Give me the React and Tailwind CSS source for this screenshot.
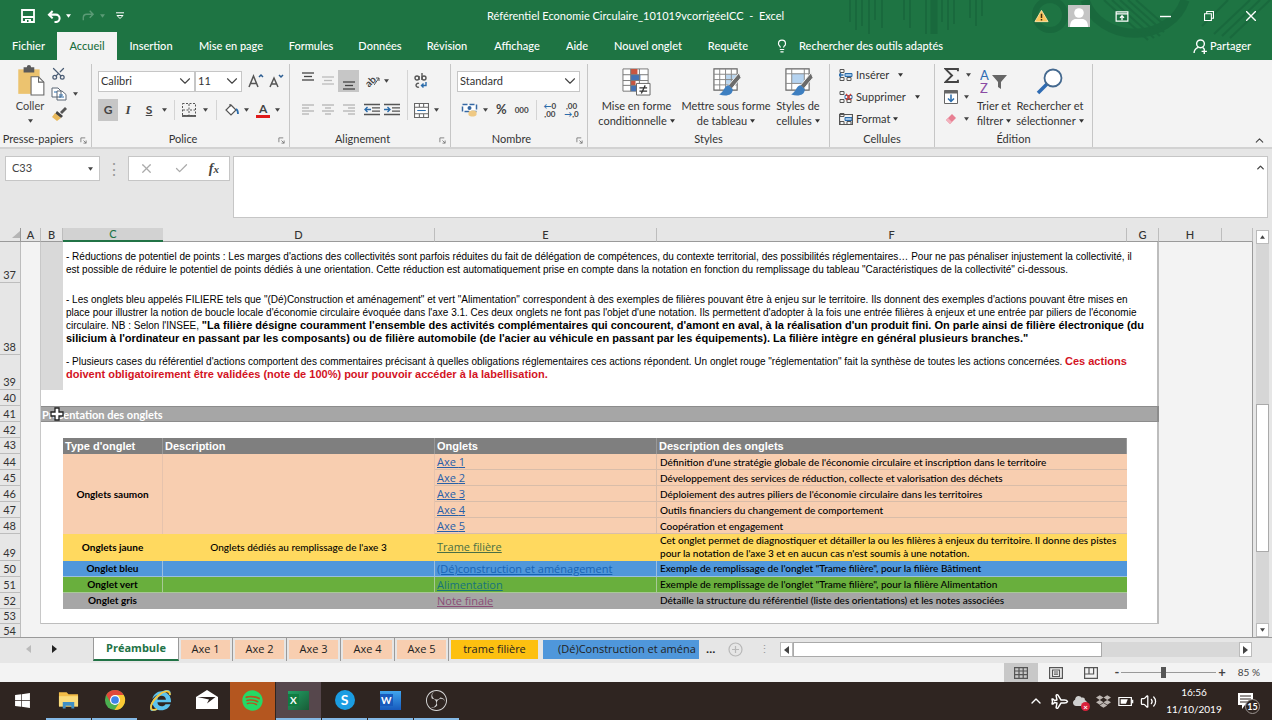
import React from "react";
import { Scissors, Lightbulb, ChevronDown, ChevronUp, X, Check, Plane, Volume2 } from "lucide-react";
import { FaWindows, FaSpotify, FaInternetExplorer, FaDropbox, FaCloud } from "react-icons/fa";
import { SiObsstudio } from "react-icons/si";

const Caret = ({ className = "" }) => (
  <svg viewBox="0 0 6 4" className={`h-[4px] w-[5px] shrink-0 fill-current ${className}`} aria-hidden="true">
    <path d="M0 0h6L3 4z" />
  </svg>
);

/* ---------- Title bar ---------- */

function HeaderPattern() {
  return (
    <svg className="pointer-events-none absolute top-0 right-0 h-full w-[430px]" viewBox="0 0 430 60" fill="none" stroke="#17623a" aria-hidden="true">
      <g opacity="0.6">
        <path d="M8 0v22M14 0v30M20 0v26M27 0v34M33 0v20M40 0v28M62 0v20M68 0v28M84 0v34M100 0v22M106 0v30M112 0v24M128 0v18M134 0v26M140 0v16" strokeWidth="2" />
        <path d="M92 0v34" strokeWidth="7" />
        <circle cx="208" cy="15" r="15" strokeWidth="6" />
        <path d="M243 0a52 46 0 0 0 100 0" strokeWidth="9" />
        <path d="M262 0l44 40M270 0l42 38M278 0l40 36M286 0l36 32M294 0l32 28" strokeWidth="2" />
        <path d="M372 34l36-34M380 36l38-36M388 38l40-38M360 26l26-26" strokeWidth="2" />
      </g>
    </svg>
  );
}

function TitleBar() {
  return (
    <div className="relative flex h-[32px] items-center text-white">
      <div className="flex flex-1 items-center pl-[21px]">
        <button aria-label="Enregistrer" className="mr-[12px]">
          <svg viewBox="0 0 14 14" className="size-[14px]" fill="none" stroke="white" strokeWidth="1.8">
            <path d="M1 1h12v12H1zM1 8h12" />
            <path d="M4 13v-3h6v3" fill="white" stroke="none" />
            <path d="M6 11h1.5v2H6z" fill="#1c7040" stroke="none" />
          </svg>
        </button>
        <button aria-label="Annuler" className="flex items-center gap-[4px]">
          <svg viewBox="0 0 16 14" className="h-[13px] w-[15px]" fill="none" stroke="white" strokeWidth="2.2">
            <path d="M6 1 2 5l4 4M2 5h7.5a4 4 0 0 1 0 8H8" />
          </svg>
          <Caret />
        </button>
        <button aria-label="Rétablir" className="ml-[10px] flex items-center gap-[5px] text-[#5b9b76]">
          <svg viewBox="0 0 16 14" className="h-[12px] w-[14px]" fill="none" stroke="currentColor" strokeWidth="1.6">
            <path d="m10 1 4 4-4 4M14 5H6.5a4 4 0 0 0-4 4v3" />
          </svg>
          <Caret className="w-[4px]" />
        </button>
        <button aria-label="Personnaliser la barre d'accès rapide" className="ml-[11px]">
          <svg viewBox="0 0 8 8" className="size-[8px]" fill="none" stroke="white" strokeWidth="1">
            <path d="M0 .8h8M1 3.5h6L4 6.5z" />
          </svg>
        </button>
      </div>
      <h1 className="mr-[22px] whitespace-pre text-[11px] font-normal">Référentiel Economie Circulaire_101019vcorrigéeICC  -  Excel</h1>
      <div className="flex flex-1 items-center justify-end">
        <svg viewBox="0 0 16 14" className="mr-[19px] h-[14px] w-[15px]" aria-label="Avertissement">
          <path d="M8 1 15 13H1z" fill="#fbc55a" stroke="#fde2a5" strokeWidth="1" />
          <path d="M8 4.5v4.5M8 10.2v1.6" stroke="#3a2c10" strokeWidth="1.6" />
        </svg>
        <button aria-label="Compte" className="mr-[25px]">
          <svg viewBox="0 0 22 22" className="size-[22px]">
            <path fill="#c4c4c4" d="M0 0h22v22H0z" />
            <circle cx="11" cy="8" r="4.8" fill="#fff" />
            <path d="M2 22c0-6 3-8 6-8h6c3 0 6 2 6 8z" fill="#fff" />
          </svg>
        </button>
        <button aria-label="Options d'affichage du ruban" className="mr-[31px]">
          <svg viewBox="0 0 14 12" className="h-[11px] w-[14px]" fill="none" stroke="white">
            <path d="M.6 1h12.8v10H.6zM.6 3.2h12.8" strokeWidth="1.3" />
            <path d="M7 10V5.5M4.8 7.5 7 5.2l2.2 2.3" strokeWidth="1.4" />
          </svg>
        </button>
        <button aria-label="Réduire" className="mr-[33px]">
          <svg viewBox="0 0 11 11" className="size-[11px]" stroke="white" strokeWidth="1.4"><path d="M0 5.5h11" /></svg>
        </button>
        <button aria-label="Niveau inférieur" className="mr-[32px]">
          <svg viewBox="0 0 11 11" className="size-[10px]" fill="none" stroke="white" strokeWidth="1.2"><path d="M.6 3h7.5v7.4H.6zM3 3V.6h7.4V8H8" /></svg>
        </button>
        <button aria-label="Fermer" className="mr-[16px]">
          <svg viewBox="0 0 10 10" className="size-[10px]" stroke="white" strokeWidth="1.4"><path d="m0 0 10 10M10 0 0 10" /></svg>
        </button>
      </div>
    </div>
  );
}

const MENU = [
  ["Fichier", "w-[57px]"],
  ["Accueil", "w-[60px]"],
  ["Insertion", "w-[68px]"],
  ["Mise en page", "w-[92px]"],
  ["Formules", "w-[68px]"],
  ["Données", "w-[70px]"],
  ["Révision", "w-[64px]"],
  ["Affichage", "w-[76px]"],
  ["Aide", "w-[44px]"],
  ["Nouvel onglet", "w-[98px]"],
  ["Requête", "w-[62px]"],
];

function MenuTabs() {
  return (
    <nav className="relative flex h-[28px] items-stretch text-[11px] font-medium text-white">
      {MENU.map(([t, w]) => (
        <button key={t} className={`${w} ${t === "Accueil" ? "bg-[#f3f3f3] text-[#1c7040]" : ""} shrink-0 whitespace-nowrap`}>
          {t}
        </button>
      ))}
      <label className="ml-[16px] flex flex-1 items-center gap-[10px]">
        <Lightbulb className="h-[16px] w-[14px] shrink-0" strokeWidth={2} />
        <input aria-label="Rechercher des outils adaptés" placeholder="Rechercher des outils adaptés" className="w-[180px] bg-transparent outline-none placeholder:text-white" />
      </label>
      <button className="mr-[21px] flex items-center gap-[2px]">
        <svg viewBox="0 0 14 14" className="size-[15px]" fill="none" stroke="white" strokeWidth="1.3">
          <circle cx="7" cy="4.5" r="3.6" />
          <path d="M1 13c0-3 2.3-4.6 4-5.2M9 8l1.5 1.2M10.5 9v5M8 11.5h5" />
        </svg>
        Partager
      </button>
    </nav>
  );
}

/* ---------- Ribbon ---------- */

function Group({ label, width, launcher, children }) {
  return (
    <section className={`${width} flex shrink-0 flex-col border-r border-[#c6c6c6]`} aria-label={label}>
      <div className="flex flex-1 flex-col">{children}</div>
      <div className={`relative flex h-[16px] items-center justify-center leading-[14px] whitespace-nowrap text-[#333] ${launcher ? "pr-[15px]" : ""}`}>
        {label}
        {launcher && (
          <button aria-label={`Paramètres ${label}`} className="absolute right-[4px] bottom-[3px]">
            <svg viewBox="0 0 8 8" className="size-[7px]" fill="none" stroke="#777"><path d="M1 6V1h5M4 4l3 3M7 4v3H4" /></svg>
          </button>
        )}
      </div>
    </section>
  );
}

function Picker({ label, value, width }) {
  return (
    <label className={`relative flex h-[21px] items-center border border-[#c6c6c6] bg-white ${width}`}>
      <select aria-label={label} className="w-full appearance-none bg-transparent pl-[2px] text-[11px] text-[#333] outline-none">
        <option>{value}</option>
      </select>
      <ChevronDown className="pointer-events-none absolute right-0 size-[18px] text-[#444]" strokeWidth={1.5} />
    </label>
  );
}

const Lines = ({ rows, className = "" }) => (
  <svg viewBox="0 0 14 14" className={`size-[14px] ${className}`} stroke="currentColor" strokeWidth="1.3" aria-hidden="true">
    {rows.map(([a, b, y]) => <path key={y} d={`M${a} ${y}h${b}`} />)}
  </svg>
);

function FontSize({ down }) {
  return (
    <svg viewBox="0 0 16 16" className="size-[16px]" fill="none" stroke="#555" aria-hidden="true">
      <path d={down ? "M2 14 6 5l4 9M3.500 11h5" : "M1 14 5.500 3 10 14M3 10.500h5"} strokeWidth="1.500" />
      <path d={down ? "m11 2 2 2 2-2" : "m11 4 2-2 2 2"} stroke="#2b5c91" strokeWidth="1.500" />
    </svg>
  );
}

function Indent({ flip }) {
  return (
    <svg viewBox="0 0 16 14" className="h-[14px] w-[16px]" fill="none" aria-hidden="true">
      <path d="M0 1.5h16M8 4.8h8M8 8.2h8M0 11.5h16" stroke="#555" strokeWidth="1.3" />
      <path d={flip ? "M0 6.5h6M3.5 4 6 6.5 3.5 9" : "M7 6.5H1M3.5 4 1 6.5 3.5 9"} stroke="#2b6cab" strokeWidth="1.4" />
    </svg>
  );
}

function GridBrush({ highlight }) {
  return (
    <svg viewBox="0 0 30 30" className="size-[29px]" fill="none" aria-hidden="true">
      <path d="M2 2h24v22H2z" fill="#fff" stroke="#666" strokeWidth="1.2" />
      {highlight ? <path d="M8 7h13v10H8z" fill="#b5d3f0" /> : <path d="M14 8h12v10H14z" fill="#b9d5ee" />}
      <path d={highlight ? "M2 7h24M2 17h24M8 2v22M21 2v22" : "M2 7.5h24M2 13h24M2 18.5h24M8 2v22M14 2v22M20 2v22"} stroke="#888" />
      <path d="M28 6 17 19l3.500 3.500L30 11z" fill="#6b6b6b" stroke="#f3f3f3" />
      <path d="M17.500 19c-5 0-4 6-10 9.500 7 2 14 1 14-5.500z" fill="#3e7fc0" />
    </svg>
  );
}

function BigButton({ icon, lines, width }) {
  return (
    <button className={`${width} flex shrink-0 flex-col items-center text-[#333]`}>
      <span className="flex h-[34px] items-center">{icon}</span>
      <span className="leading-[15px] whitespace-nowrap">{lines[0]}</span>
      <span className="flex items-center gap-[3px] leading-[15px] whitespace-nowrap">{lines[1]}<Caret className="w-[4px]" /></span>
    </button>
  );
}

function CellButton({ label, kind }) {
  return (
    <button className="flex h-[22px] items-center gap-[3px] text-[#333]">
      <svg viewBox="0 0 14 14" className="size-[14px]" fill="none" stroke="#555" aria-hidden="true">
        <path d="M1 1.500h4v3H1zM1 9.500h4v3H1zM8 9.500h4v3H8z" />
        <path d="M6 5.500h7v3H6z" fill={kind === "del" ? "#fff" : "#9cc3e8"} stroke="#2b6cab" />
        {kind === "ins" && <path d="M4.500 7H0M2 5 0 7l2 2" stroke="#2b6cab" strokeWidth="1.300" />}
        {kind === "del" && <path d="m7 4 5 6M12 4l-5 6" stroke="#c8413a" strokeWidth="1.500" />}
        {kind === "fmt" && <path d="M.5 2.500h13v10H.5z" strokeWidth="1.200" />}
      </svg>
      {label}
      <Caret className={kind === "fmt" ? "" : "ml-[6px]"} />
    </button>
  );
}

function Ribbon() {
  return (
    <div className="flex h-[89px] border-b-2 border-[#d2d2d2] bg-[#f3f3f3] pt-[4px] text-[11px] text-[#444]">
      <Group label="Presse-papiers" width="w-[92px]" launcher>
        <div className="flex pl-[13px]">
          <button className="flex w-[34px] flex-col items-center">
            <svg viewBox="0 0 28 30" className="size-[32px]" aria-hidden="true">
              <path d="M3 5h20v23H3z" fill="#ecc36f" />
              <path d="M8 3h3a2 2 0 0 1 4 0h3v5H8z" fill="#5a5a5a" />
              <path d="M15 12h7l5 5v12H15z" fill="#fff" stroke="#666" />
              <path d="M22 12v5h5" fill="none" stroke="#666" />
            </svg>
            <span className="mt-[3px] leading-[14px]">Coller</span>
            <Caret className="mt-[6px]" />
          </button>
          <div className="flex flex-col gap-[6px] pt-[2px] pl-[4px]">
            <button aria-label="Couper"><Scissors className="size-[15px] -rotate-90 text-[#4a5c74]" strokeWidth={2} /></button>
            <button aria-label="Copier" className="flex items-center gap-[6px]">
              <svg viewBox="0 0 16 14" className="h-[14px] w-[16px]" fill="#fff" stroke="#5a6675" aria-hidden="true">
                <path d="M1 1h6l3 3v6H1zM6 4h5l4 3.500V13H6z" /><path d="M3 5h3M8 8h4M8 10h5" stroke="#2b6cab" />
              </svg>
              <Caret />
            </button>
            <button aria-label="Reproduire la mise en forme">
              <svg viewBox="0 0 16 14" className="h-[14px] w-[16px]" aria-hidden="true">
                <path d="m9 5 5-5 2 2-5 5z" fill="#555" /><path d="m6 4 6 5-2 2-6-4z" fill="#444" /><path d="m4 6 6 5-4 3-5-4z" fill="#e9b95b" />
              </svg>
            </button>
          </div>
        </div>
      </Group>

      <Group label="Police" width="w-[198px]" launcher>
        <div className="flex h-[34px] items-center pl-[6px]">
          <Picker label="Police" value="Calibri" width="w-[97px]" />
          <Picker label="Taille" value="11" width="w-[47px]" />
          <button aria-label="Agrandir la police" className="ml-[6px]"><FontSize /></button>
          <button aria-label="Réduire la police" className="ml-[4px]"><FontSize down /></button>
        </div>
        <div className="flex h-[24px] items-center pl-[6px]">
          <button className="h-[22px] w-[20px] bg-[#c6c6c6] text-[12px] font-bold">G</button>
          <button className="w-[20px] font-[Liberation_Serif] text-[13px] font-bold italic">I</button>
          <button className="w-[22px] text-[12px] font-bold underline">S</button>
          <Caret className="ml-[2px]" />
          <span className="mx-[7px] h-[20px] w-px bg-[#d4d4d4]" />
          <button aria-label="Bordures" className="flex items-center gap-[7px]">
            <svg viewBox="0 0 14 14" className="size-[14px]" fill="none" stroke="#555" aria-hidden="true">
              <path d="M.5.5h13v12H.5zM7 1v12M1 7h12" strokeDasharray="2 1.500" /><path d="M0 13h14" strokeWidth="1.800" />
            </svg>
            <Caret />
          </button>
          <span className="mx-[8px] h-[20px] w-px bg-[#d4d4d4]" />
          <button aria-label="Remplissage" className="flex items-center gap-[5px]">
            <svg viewBox="0 0 14 14" className="size-[14px]" fill="#fff" stroke="#555" strokeWidth="1.200" aria-hidden="true">
              <path d="m6 2 5 5-5 5-5-5zM5 4V1" /><path d="M11 6c2 1 2 3 2 5" stroke="#2b6cab" strokeWidth="1.800" fill="none" />
            </svg>
            <Caret />
          </button>
          <button aria-label="Couleur de police" className="ml-[7px] flex items-center gap-[5px]">
            <span className="border-b-[3px] border-[#e01a1a] px-[3px] text-[12px] leading-[12px] font-bold">A</span>
            <Caret />
          </button>
        </div>
      </Group>

      <Group label="Alignement" width="w-[161px]" launcher>
        <div className="flex flex-1 items-start justify-between pt-[6px] pr-[10px] pl-[8px]">
          <div className="flex flex-col gap-[7px]">
            <div className="flex h-[22px] items-center">
              <button aria-label="Aligner en haut" className="flex w-[20px] justify-center pb-[6px]"><Lines rows={[[1, 12, 2], [3, 8, 5.5], [1, 12, 9]]} /></button>
              <button aria-label="Aligner au centre" className="flex w-[20px] justify-center text-[#bbb]"><Lines rows={[[1, 12, 3], [3, 8, 6.5], [1, 12, 10]]} /></button>
              <button aria-label="Aligner en bas" className="flex h-[22px] w-[21px] items-end justify-center bg-[#c6c6c6] pb-px"><Lines rows={[[1, 12, 5], [3, 8, 8.5], [1, 12, 12]]} /></button>
              <button aria-label="Orientation" className="ml-[6px] flex items-center gap-[4px]">
                <span className="-rotate-45 text-[10px] font-bold">ab</span>
                <svg viewBox="0 0 6 10" className="-ml-[6px] h-[10px] w-[6px]" stroke="#555" fill="none" aria-hidden="true"><path d="m0 9 5-7M2 2h3v3" /></svg>
                <Caret />
              </button>
            </div>
            <div className="flex h-[22px] items-center text-[#b4b4b4]">
              <button aria-label="Gauche" className="flex w-[20px] justify-center"><Lines rows={[[1, 12, 2], [1, 7, 5], [1, 12, 8], [1, 7, 11]]} /></button>
              <button aria-label="Centrer" className="flex w-[20px] justify-center"><Lines rows={[[1, 12, 2], [4, 6, 5], [1, 12, 8], [4, 6, 11]]} /></button>
              <button aria-label="Droite" className="flex w-[21px] justify-center"><Lines rows={[[1, 12, 2], [6, 7, 5], [1, 12, 8], [6, 7, 11]]} /></button>
              <button aria-label="Diminuer le retrait" className="ml-[5px]"><Indent /></button>
              <button aria-label="Augmenter le retrait" className="ml-[4px]"><Indent flip /></button>
            </div>
          </div>
          <span className="h-[50px] w-px bg-[#d4d4d4]" />
          <div className="flex w-[26px] flex-col gap-[7px]">
            <button aria-label="Renvoyer à la ligne" className="flex h-[22px] items-center">
              <svg viewBox="0 0 14 16" className="h-[16px] w-[14px]" fill="none" stroke="#555" strokeWidth="1.400" aria-hidden="true">
                <circle cx="3" cy="5" r="2" /><path d="M5 3v4M8 0v7" /><circle cx="10" cy="5" r="2" /><path d="M5 10.500a2 2 0 1 0 0 3.500" /><path d="M12 9v3.500H7.500M9.500 10.500l-2 2 2 2" stroke="#2b6cab" />
              </svg>
            </button>
            <button aria-label="Fusionner" className="flex h-[22px] items-center gap-[5px]">
              <svg viewBox="0 0 14 14" className="size-[15px]" fill="#fff" stroke="#666" aria-hidden="true">
                <path d="M.5.5h13v13H.5zM.5 4h13M.5 10h13M5 .5V4M9 .5V4M5 10v3.500M9 10v3.500" /><path d="M3 7h8" stroke="#2b6cab" />
              </svg>
              <Caret />
            </button>
          </div>
        </div>
      </Group>

      <Group label="Nombre" width="w-[137px]" launcher>
        <div className="flex h-[34px] items-center pl-[6px]"><Picker label="Format de nombre" value="Standard" width="w-[123px]" /></div>
        <div className="flex h-[24px] items-center pl-[10px]">
          <button aria-label="Format comptabilité" className="flex items-center gap-[5px]">
            <svg viewBox="0 0 16 14" className="h-[14px] w-[17px]" aria-hidden="true">
              <path d="M1 1.500h14v7H1z" fill="#fff" stroke="#3467a3" strokeWidth="1.500" strokeDasharray="5 2" /><circle cx="8" cy="5" r="2" fill="#3467a3" /><path d="M7 9c2-2 7-2 8 0v3c-2 2-6 2-8 0z" fill="#efc984" />
            </svg>
            <Caret />
          </button>
          <button className="ml-[8px] text-[13px] font-bold">%</button>
          <button className="ml-[8px] text-[8px] font-bold">000</button>
          <span className="mx-[7px] h-[20px] w-px bg-[#d4d4d4]" />
          <button aria-label="Ajouter une décimale" className="flex flex-col text-[8px] leading-[8px] font-bold"><span><span className="text-[#2b6cab]">←</span>0</span><span>,00</span></button>
          <button aria-label="Réduire les décimales" className="ml-[8px] flex flex-col text-[8px] leading-[8px] font-bold"><span>,00</span><span><span className="text-[#2b6cab]">→</span>,0</span></button>
        </div>
      </Group>

      <Group label="Styles" width="w-[242px]">
        <div className="flex pl-[4px]">
          <BigButton width="w-[89px]" lines={["Mise en forme", "conditionnelle"]} icon={
            <svg viewBox="0 0 30 30" className="size-[29px]" aria-hidden="true">
              <path d="M1 2h26v23H1z" fill="#fff" stroke="#777" /><path d="M9 2h7v6H9zM9 14h5v5H9z" fill="#c8553f" /><path d="M9 8h10v6H9z" fill="#4472b4" /><path d="M9 19h6v6H9z" fill="#4472b4" />
              <path d="M1 8h26M1 14h26M1 19h26M9 2v23M18 2v23" stroke="#777" fill="none" /><path d="M15 17h14v12H15z" fill="#fff" stroke="#666" /><path d="M18 21.500h8M18 25h8M24 19l-4 8.500" stroke="#333" strokeWidth="1.300" />
            </svg>} />
          <BigButton width="w-[90px]" lines={["Mettre sous forme", "de tableau"]} icon={<GridBrush />} />
          <BigButton width="w-[54px]" lines={["Styles de", "cellules"]} icon={<GridBrush highlight />} />
        </div>
      </Group>

      <Group label="Cellules" width="w-[105px]">
        <div className="flex flex-col pl-[9px]">
          <CellButton label="Insérer" kind="ins" />
          <CellButton label="Supprimer" kind="del" />
          <CellButton label="Format" kind="fmt" />
        </div>
      </Group>

      <Group label="Édition" width="w-[158px]">
        <div className="flex">
          <div className="flex w-[40px] flex-col pl-[9px]">
            <button aria-label="Somme" className="flex h-[22px] items-center gap-[7px]">
              <svg viewBox="0 0 14 14" className="size-[15px]" fill="none" stroke="#444" strokeWidth="1.800" aria-hidden="true"><path d="M13 3V1H1.500l6 6-6 6H13v-2" /></svg><Caret />
            </button>
            <button aria-label="Recopier" className="flex h-[22px] items-center gap-[6px]">
              <svg viewBox="0 0 14 14" className="size-[14px]" fill="#fff" stroke="#666" aria-hidden="true"><path d="M.5.5h13v13H.5z" /><path d="M.5 2h13" strokeWidth="3" /><path d="M7 4.500v7M4 8.500l3 3 3-3" stroke="#2b6cab" strokeWidth="1.500" fill="none" /></svg><Caret />
            </button>
            <button aria-label="Effacer" className="flex h-[22px] items-center gap-[6px]">
              <svg viewBox="0 0 14 14" className="size-[14px]" aria-hidden="true"><path d="m8 2 4 4-6 6-4-4z" fill="#e87f92" /><path d="m4 6 4 4-2 2-4-4z" fill="#f3b2bd" /></svg><Caret />
            </button>
          </div>
          <BigButton width="w-[38px]" lines={["Trier et", "filtrer"]} icon={
            <svg viewBox="0 0 28 28" className="size-[28px]" aria-hidden="true">
              <text x="0" y="13" fontSize="13" fontFamily="Lato" fill="#2f6cb3">A</text><text x="0" y="26" fontSize="13" fontFamily="Lato" fill="#8a4ba3">Z</text>
              <path d="M12 8h15l-6 7v7l-3-2v-5z" fill="#666" />
            </svg>} />
          <BigButton width="w-[74px]" lines={["Rechercher et", "sélectionner"]} icon={
            <svg viewBox="0 0 28 28" className="size-[28px]" fill="none" aria-hidden="true"><path d="M11 17 2 26" stroke="#2f6cb3" strokeWidth="3.500" /><circle cx="17" cy="11" r="8.500" fill="#fff" stroke="#44698f" strokeWidth="1.800" /></svg>} />
        </div>
      </Group>
      <div className="flex flex-1 items-end justify-end pr-[6px]">
        <button aria-label="Réduire le ruban"><ChevronUp className="size-[13px]" strokeWidth={2} /></button>
      </div>
    </div>
  );
}

/* ---------- Formula bar ---------- */

function FormulaBar() {
  return (
    <div className="flex h-[79px] items-start bg-[#e6e6e6] pt-[7px] pr-[4px] pl-[5px]">
      <label className="flex h-[25px] w-[95px] items-center border border-[#c6c6c6] bg-white pr-[6px] text-[#444]">
        <input aria-label="Zone Nom" defaultValue="C33" className="w-full min-w-0 bg-transparent pl-[6px] text-[11px] outline-none" />
        <Caret />
      </label>
      <div className="flex h-[25px] w-[28px] items-center justify-center text-[#999]">⋮</div>
      <div className="flex h-[25px] w-[102px] items-center justify-around border border-[#c6c6c6] bg-white">
        <button aria-label="Annuler la saisie"><X className="size-[15px] text-[#aaa]" strokeWidth={2} /></button>
        <button aria-label="Entrer"><Check className="size-[15px] text-[#aaa]" strokeWidth={2} /></button>
        <button aria-label="Insérer une fonction" className="font-[Liberation_Serif] text-[14px] font-bold text-[#444] italic">f<span className="text-[11px]">x</span></button>
      </div>
      <div className="relative ml-[3px] flex h-[62px] flex-1">
        <textarea aria-label="Barre de formule" className="h-full w-full resize-none border border-[#c6c6c6] bg-white outline-none" />
        <button aria-label="Réduire la barre de formule" className="absolute top-[6px] right-[2px]"><ChevronUp className="size-[11px] text-[#444]" strokeWidth={3} /></button>
      </div>
    </div>
  );
}

/* ---------- Worksheet ---------- */

const RowHead = ({ n, h }) => (
  <th scope="row" className={`${h} border-r border-b border-[#bdbdbd] bg-[#e6e6e6] px-0 pb-px text-right align-bottom text-[11px] leading-[13px] font-normal text-[#333]`}>
    <span className="pr-[4px]">{n}</span>
  </th>
);

const Outside = () => (
  <>
    <td className="bg-[#f3f3f3]" />
    <td className="border-r border-[#9a9a9a] bg-[#f3f3f3]" />
  </>
);

const ColA = () => <td className="border-r border-[#c8c8c8] bg-[#f3f3f3]" />;
const ColG = () => <td className="border-r-2 border-[#bdbdbd]" />;

function NoteRow({ n, h, align = "align-middle", children }) {
  return (
    <tr>
      <RowHead n={n} h={h} />
      <ColA />
      <td className="bg-[#d9d9d9]" />
      <td colSpan={5} className={`${align} border-r-2 border-[#bdbdbd] pl-[3px] font-[Liberation_Sans] text-[10px] leading-[13px] whitespace-nowrap text-black`}>{children}</td>
      <Outside />
    </tr>
  );
}

const B = ({ children }) => <b className="text-[11px]">{children}</b>;

function BlankRow({ n, h, last }) {
  return (
    <tr>
      <RowHead n={n} h={h} />
      <ColA />
      <td colSpan={6} className={`border-r-2 border-[#bdbdbd] ${last ? "border-b" : ""}`} />
      <Outside />
    </tr>
  );
}

const AXES = [
  "Définition d'une stratégie globale de l'économie circulaire et inscription dans le territoire",
  "Développement des services de réduction, collecte et valorisation des déchets",
  "Déploiement des autres piliers de l'économie circulaire dans les territoires",
  "Outils financiers du changement de comportement",
  "Coopération et engagement",
];

const SECTIONS = [
  { n: 49, h: "h-[27px]", bg: "bg-[#ffd95f]", edge: "border-[#ffd95f]", type: "Onglets jaune", desc: "Onglets dédiés au remplissage de l'axe 3", link: "Trame filière", color: "text-[#4a6f45]",
    text: <>Cet onglet permet de diagnostiquer et détailler la ou les filières à enjeux du territoire. Il donne des pistes<br />pour la notation de l'axe 3 et en aucun cas n'est soumis à une notation.</> },
  { n: 50, h: "h-[16px]", bg: "bg-[#5097db]", edge: "border-[#9bbfe0]", type: "Onglet bleu", link: "(Dé)construction et aménagement", color: "text-[#1763b5]", text: "Exemple de remplissage de l'onglet \"Trame filière\", pour la filière Bâtiment" },
  { n: 51, h: "h-[16px]", bg: "bg-[#69af3d]", edge: "border-[#a8c996]", type: "Onglet vert", link: "Alimentation", color: "text-[#16737c]", text: "Exemple de remplissage de l'onglet \"Trame filière\", pour la filière Alimentation" },
  { n: 52, h: "h-[16px]", bg: "bg-[#a6a6a6]", edge: "border-[#a6a6a6]", type: "Onglet gris", link: "Note finale", color: "text-[#8b4d77]", text: "Détaille la structure du référentiel (liste des orientations) et les notes associées" },
];

const COLS = ["A", "B", "C", "D", "E", "F", "G", "H", ""];

function Sheet() {
  const link = "font-[Open_Sans] text-[11px] leading-[14px] underline";
  return (
    <div className="flex min-h-0 flex-1 bg-[#e6e6e6]">
      <div className="min-w-0 flex-1 overflow-hidden">
        <table className="w-full table-fixed border-separate border-spacing-0 bg-white [&_td]:py-0">
          <colgroup>
            <col className="w-[21px]" /><col className="w-[20px]" /><col className="w-[22px]" /><col className="w-[100px]" /><col className="w-[272px]" /><col className="w-[222px]" /><col /><col className="w-[32px]" /><col className="w-[63px]" /><col className="w-[31px]" />
          </colgroup>
          <thead>
            <tr className="bg-[#e6e6e6] text-[11px] leading-[12px] text-[#333]">
              <th className="h-[14px] border-r border-b border-[#9a9a9a] p-0">
                <svg viewBox="0 0 8 8" className="ml-auto size-[8px]" fill="#b5b5b5" aria-hidden="true"><path d="M8 0v7H0z" /></svg>
              </th>
              {COLS.map((c) => (
                <th key={c} scope="col" className={c === "C" ? "border-b-2 border-[#217346] bg-[#d2d2d2] p-0 font-medium text-[#217346]" : "border-r border-b border-r-[#bdbdbd] border-b-[#9a9a9a] p-0 font-medium"}>{c}</th>
              ))}
            </tr>
          </thead>
          <tbody>
            <NoteRow n={37} h="h-[41px]">
              - Réductions de potentiel de points : Les marges d'actions des collectivités sont parfois réduites du fait de délégation de compétences, du contexte territorial, des possibilités réglementaires… Pour ne pas pénaliser injustement la collectivité, il<br />
              est possible de réduire le potentiel de points dédiés à une orientation. Cette réduction est automatiquement prise en compte dans la notation en fonction du remplissage du tableau "Caractéristiques de la collectivité" ci-dessous.
            </NoteRow>
            <NoteRow n={38} h="h-[72px]">
              - Les onglets bleu appelés FILIERE tels que "(Dé)Construction et aménagement" et vert "Alimentation" correspondent à des exemples de filières pouvant être à enjeu sur le territoire. Ils donnent des exemples d'actions pouvant être mises en<br />
              place pour illustrer la notion de boucle locale d'économie circulaire évoquée dans l'axe 3.1. Ces deux onglets ne font pas l'objet d'une notation. Ils permettent d'adopter à la fois une entrée filières à enjeux et une entrée par piliers de l'économie<br />
              circulaire. NB : Selon l'INSEE, <B>"La filière désigne couramment l'ensemble des activités complémentaires qui concourent, d'amont en aval, à la réalisation d'un produit fini. On parle ainsi de filière électronique (du<br />
              silicium à l'ordinateur en passant par les composants) ou de filière automobile (de l'acier au véhicule en passant par les équipements). La filière intègre en général plusieurs branches."</B>
            </NoteRow>
            <NoteRow n={39} h="h-[35px]" align="align-top">
              - Plusieurs cases du référentiel d'actions comportent des commentaires précisant à quelles obligations réglementaires ces actions répondent. Un onglet rouge "réglementation" fait la synthèse de toutes les actions concernées. <span className="text-[#d3131f]"><B>Ces actions<br />doivent obligatoirement être validées (note de 100%) pour pouvoir accéder à la labellisation.</B></span>
            </NoteRow>
            <BlankRow n={40} h="h-[16px]" />
            <tr>
              <RowHead n={41} h="h-[16px]" />
              <ColA />
              <td colSpan={6} className="relative border-y border-r-2 border-y-[#8c8c8c] border-r-[#8c8c8c] bg-[#a6a6a6] pl-px text-[11px] leading-[13px] font-bold text-white">
                Présentation des onglets
                <svg viewBox="0 0 14 14" className="absolute top-0 left-[9px] size-[14px]" fill="#fff" stroke="#222" strokeWidth="1.3" aria-hidden="true">
                  <path d="M5 1h4v4h4v4H9v4H5V9H1V5h4z" />
                </svg>
              </td>
              <Outside />
            </tr>
            <BlankRow n={42} h="h-[16px]" />
            <tr className="font-[Liberation_Sans] text-[11px] leading-[14px] font-bold text-white">
              <RowHead n={43} h="h-[16px]" />
              <ColA />
              <td />
              {["Type d'onglet", "Description", "Onglets", "Description des onglets"].map((t) => (
                <td key={t} className="border-r border-[#999] bg-[#7f7f7f] pl-[2px]">{t}</td>
              ))}
              <ColG />
              <Outside />
            </tr>
            {AXES.map((t, i) => (
              <tr key={t} className="text-[10px] leading-[14px] font-medium text-black">
                <RowHead n={44 + i} h="h-[16px]" />
                <ColA />
                <td />
                {i === 0 && (
                  <>
                    <td rowSpan={5} className="border-r border-[#e6c3ad] bg-[#f8ceb0] text-center align-middle font-bold">Onglets saumon</td>
                    <td rowSpan={5} className="border-r border-[#e6c3ad] bg-[#f8ceb0]" />
                  </>
                )}
                <td className="border-r border-b border-[#d9bda9] bg-[#f8ceb0] pl-[2px]"><a href="#axe" className={`${link} block text-[#2860a8]`}>Axe {i + 1}</a></td>
                <td className="border-b border-[#d9bda9] bg-[#f8ceb0] pl-[3px] whitespace-nowrap">{t}</td>
                <ColG />
                <Outside />
              </tr>
            ))}
            {SECTIONS.map((s) => (
              <tr key={s.n} className="text-[10px] leading-[13px] font-medium text-black">
                <RowHead n={s.n} h={s.h} />
                <ColA />
                <td />
                <td className={`${s.bg} ${s.edge} border-r border-b text-center font-bold`}>{s.type}</td>
                <td className={`${s.bg} ${s.edge} border-r border-b text-center`}>{s.desc}</td>
                <td className={`${s.bg} ${s.edge} border-r border-b pl-[2px] whitespace-nowrap`}><a href="#onglet" className={`${link} block ${s.color}`}>{s.link}</a></td>
                <td className={`${s.bg} ${s.edge} border-b pl-[3px] whitespace-nowrap`}>{s.text}</td>
                <ColG />
                <Outside />
              </tr>
            ))}
            <BlankRow n={53} h="h-[15px]" last />
            <tr>
              <RowHead n={54} h="h-[15px]" />
              <td colSpan={9} className="border-r border-[#9a9a9a] bg-[#f3f3f3]" />
            </tr>
          </tbody>
        </table>
      </div>
      <div className="flex w-[19px] flex-col items-center pt-[2px]" aria-hidden="true">
        <div className="flex w-[13px] flex-1 flex-col bg-[#d6d6d6]">
          <div className="flex h-[14px] items-center justify-center border border-[#bbb] bg-white"><Caret className="rotate-180 text-[#444]" /></div>
          <div className="flex-[161]" />
          <div className="flex-[147] border border-[#aaa] bg-white" />
          <div className="flex-[71]" />
          <div className="flex h-[14px] items-center justify-center border border-[#bbb] bg-white"><Caret className="text-[#444]" /></div>
        </div>
      </div>
    </div>
  );
}

/* ---------- Sheet tabs and status bar ---------- */

const Arrow = ({ flip, className = "" }) => (
  <svg viewBox="0 0 5 8" className={`h-[8px] w-[5px] fill-current ${flip ? "rotate-180" : ""} ${className}`} aria-hidden="true"><path d="M0 0l5 4-5 4z" /></svg>
);

function SheetTabs() {
  return (
    <div className="flex h-[26px] items-start border-t border-[#9a9a9a] bg-[#e6e6e6] font-[Open_Sans] text-[11px] text-[#222]">
      <div className="flex h-[22px] w-[93px] shrink-0 items-center pl-[26px]">
        <button aria-label="Onglet précédent"><Arrow flip className="text-[#bbb]" /></button>
        <button aria-label="Onglet suivant" className="ml-[21px]"><Arrow className="text-[#222]" /></button>
      </div>
      <button className="h-[23px] w-[86px] shrink-0 border-x border-b-2 border-x-[#9a9a9a] border-b-[#217346] bg-white font-bold text-[#217346]">Préambule</button>
      {[1, 2, 3, 4, 5].map((n) => (
        <span key={n} className="flex h-[23px] w-[54px] shrink-0 border-r border-[#9a9a9a] p-[2px]">
          <button className="flex-1 bg-[#f8ceb0]">Axe {n}</button>
        </span>
      ))}
      <span className="flex h-[23px] w-[92px] shrink-0 border-r border-[#e6e6e6] p-[2px]"><button className="flex-1 bg-[#fdc010]">trame filière</button></span>
      <span className="flex h-[23px] w-[158px] shrink-0 py-[2px] pl-[2px]"><button className="flex-1 bg-[#4f97db] pl-[15px] text-left whitespace-nowrap">(Dé)Construction et aména</button></span>
      <div className="flex h-[23px] w-[81px] shrink-0 items-center justify-between pl-[7px]">
        <b>…</b>
        <button aria-label="Nouvelle feuille" className="ml-[8px]">
          <svg viewBox="0 0 15 15" className="size-[15px]" fill="none" stroke="#b8b8b8" strokeWidth="1.2"><circle cx="7.5" cy="7.500" r="6.500" /><path d="M7.500 4v7M4 7.500h7" /></svg>
        </button>
        <span className="w-[32px] text-center text-[#999]">⋮</span>
      </div>
      <div className="mt-[4px] mr-[20px] flex h-[15px] flex-1 bg-[#d8d8d8]">
        <div className="flex w-[13px] items-center justify-center border border-[#bbb] bg-white"><Arrow flip className="text-[#444]" /></div>
        <div className="flex-[308] border border-[#aaa] bg-white" />
        <div className="flex-[138]" />
        <div className="flex w-[13px] items-center justify-center border border-[#bbb] bg-white"><Arrow className="text-[#444]" /></div>
      </div>
    </div>
  );
}

function StatusBar() {
  return (
    <div className="flex h-[19px] items-center justify-end bg-[#f3f3f3] pr-[12px] text-[10px] text-[#444]">
      <button aria-label="Normal" className="flex h-full w-[34px] items-center justify-center bg-[#c8c8c8]">
        <svg viewBox="0 0 14 12" className="h-[12px] w-[14px]" fill="none" stroke="#555" strokeWidth="1.200"><path d="M.6.6h12.800v10.800H.6zM.6 4h12.800M.6 7.700h12.800M5 .6v10.800M9.200.6v10.800" /></svg>
      </button>
      <button aria-label="Mise en page" className="ml-[11px]">
        <svg viewBox="0 0 14 12" className="h-[12px] w-[14px]" fill="none" stroke="#555" strokeWidth="1.200"><path d="M.6.6h12.800v10.800H.6zM3.500 3h7v6.500h-7zM5 5h4M5 7.200h4" /></svg>
      </button>
      <button aria-label="Aperçu des sauts de page" className="ml-[21px]">
        <svg viewBox="0 0 14 12" className="h-[12px] w-[14px]" fill="none" stroke="#555" strokeWidth="1.200"><path d="M.6.6h12.800v10.800H.6zM.6 7h9V.6M5 .6V7" /></svg>
      </button>
      <button aria-label="Zoom arrière" className="ml-[15px] w-[8px] text-[13px] leading-[13px] font-bold">-</button>
      <input type="range" aria-label="Zoom" min="0" max="100" defaultValue="44" className="h-[12px] w-[95px] appearance-none bg-[linear-gradient(#999,#999)] bg-[length:100%_1px] bg-center bg-no-repeat [&::-webkit-slider-thumb]:h-[11px] [&::-webkit-slider-thumb]:w-[5px] [&::-webkit-slider-thumb]:appearance-none [&::-webkit-slider-thumb]:bg-[#555]" />
      <button aria-label="Zoom avant" className="ml-[2px] w-[8px] text-[13px] leading-[13px] font-bold">+</button>
      <span className="ml-[8px] w-[26px] text-right whitespace-nowrap">85 %</span>
    </div>
  );
}

/* ---------- Taskbar ---------- */

function Chrome() {
  return (
    <svg viewBox="0 0 24 24" className="size-[22px]" aria-hidden="true">
      <circle cx="12" cy="12" r="11" fill="#4caf50" />
      <path d="M12 12h0l-4.800 2.800L2.500 6.500A11 11 0 0 1 21.500 6.500L12 6.500z" fill="#e0483a" />
      <path d="M12 6.500h9.500A11 11 0 0 1 11.500 23l5.300-8.300z" fill="#fbc934" />
      <circle cx="12" cy="12" r="5.500" fill="#fff" /><circle cx="12" cy="12" r="4.200" fill="#3f83ea" />
    </svg>
  );
}

const APPS = [
  { name: "Démarrer", icon: <FaWindows className="size-[17px] text-white" /> },
  { name: "Explorateur de fichiers", open: true, icon: (
    <svg viewBox="0 0 22 18" className="h-[18px] w-[21px]" aria-hidden="true"><path d="M1 1h8l2 2h10v12H1z" fill="#f3bd48" /><path d="M1 5h20v11H1z" fill="#fbdc7c" /><path d="M5 18v-7h12v7h-3v-3H8v3z" fill="#3f8fc6" /></svg>) },
  { name: "Chrome", open: true, icon: <Chrome /> },
  { name: "Internet Explorer", icon: (
    <span className="relative">
      <FaInternetExplorer className="size-[21px] text-[#5cc3ee]" />
      <svg viewBox="0 0 21 21" className="absolute inset-0 size-[21px]" fill="none" stroke="#f5c63c" strokeWidth="1.800" aria-hidden="true"><path d="M20 5c0-6-7-4-12 1C3 10-1 17 2 19.500c2 1 4 0 5-.5" /></svg>
    </span>) },
  { name: "Courrier", icon: (
    <svg viewBox="0 0 24 20" className="h-[20px] w-[24px]" aria-hidden="true"><path d="M1 7 12 0l11 7v12H1z" fill="#fff" /><path d="M2.500 7h18L12 13.500l2-4z" fill="#2b211e" /></svg>) },
  { name: "Spotify", tile: "bg-[#b4561f]", icon: <FaSpotify className="size-[21px] text-[#25d865]" /> },
  { name: "Excel", tile: "bg-[#56474c]", open: true, icon: (
    <span className="flex h-[19px] w-[21px] items-center bg-linear-to-br from-[#21a366] to-[#185c37]"><span className="bg-[#107c41] px-[2px] text-[10px] leading-[12px] font-bold text-white">X</span></span>) },
  { name: "Skype", open: true, icon: <span className="flex size-[20px] items-center justify-center rounded-full bg-[#1b9de2] text-[14px] leading-none font-bold text-white">S</span> },
  { name: "Word", open: true, icon: (
    <span className="flex h-[19px] w-[21px] items-center bg-linear-to-b from-[#41a5ee] to-[#185abd]"><span className="bg-[#185abd] px-px text-[10px] leading-[12px] font-bold text-white">W</span></span>) },
  { name: "OBS", open: true, icon: <SiObsstudio className="size-[21px] text-[#d8d8d8]" /> },
];

function Taskbar() {
  return (
    <footer className="flex h-[38px] items-stretch bg-[#2f2521] text-white">
      {APPS.map((a) => (
        <button key={a.name} aria-label={a.name} className={`${a.tile ?? ""} ${a.open ? "border-[#84b9e6]" : "border-transparent"} mr-px flex w-[45px] shrink-0 items-center justify-center border-b-2`}>{a.icon}</button>
      ))}
      <div className="flex flex-1 items-center justify-end gap-[6px] pr-[17px]">
        <ChevronUp className="size-[16px]" strokeWidth={2} />
        <Plane className="size-[17px] rotate-45" strokeWidth={2} />
        <span className="relative">
          <FaCloud className="size-[14px] text-[#cfcfcf]" />
          <span className="absolute right-[-3px] bottom-[-3px] flex size-[9px] items-center justify-center rounded-full bg-[#d9203a] text-[8px] leading-none font-bold">×</span>
        </span>
        <FaDropbox className="ml-[3px] size-[15px] text-[#bdb6b2]" />
        <svg viewBox="0 0 18 12" className="ml-px h-[11px] w-[16px]" fill="none" stroke="#fff" strokeWidth="1.400" aria-hidden="true"><path d="M1 1.500h14v9H1zM16.500 4v4" /><path d="M3 3.500h8l-2 5H3z" fill="#fff" stroke="none" /></svg>
        <Volume2 className="size-[17px]" strokeWidth={1.800} />
        <time className="ml-[2px] w-[58px] text-center text-[10px] leading-[17px] whitespace-nowrap">16:56<br />11/10/2019</time>
        <button aria-label="Notifications" className="relative ml-[8px]">
          <svg viewBox="0 0 18 18" className="size-[18px]" aria-hidden="true"><path d="M1 1h15v12H8l-3 4v-4H1z" fill="#fff" /><path d="M3 4h11M3 7h11M3 10h8" stroke="#2f2521" /></svg>
          <span className="absolute top-[7px] left-[8px] flex size-[15px] items-center justify-center rounded-full border border-[#9b9491] bg-[#2f2521] text-[9px] font-bold">15</span>
        </button>
      </div>
    </footer>
  );
}

export default function App() {
  return (
    <div className="flex h-screen min-w-[1100px] flex-col overflow-hidden bg-[#e6e6e6] font-[Lato,sans-serif]">
      <header className="relative bg-[#1e7443]">
        <HeaderPattern />
        <TitleBar />
        <MenuTabs />
      </header>
      <Ribbon />
      <FormulaBar />
      <Sheet />
      <SheetTabs />
      <StatusBar />
      <Taskbar />
    </div>
  );
}
